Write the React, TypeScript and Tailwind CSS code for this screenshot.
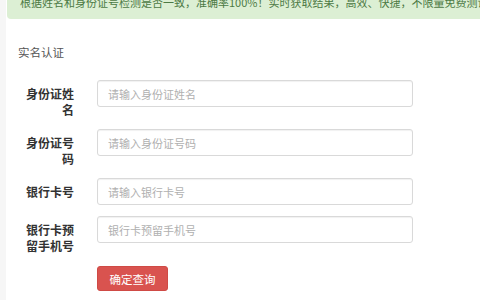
import React from "react";

const rows = [
  { label: "身份证姓名", placeholder: "请输入身份证姓名" },
  { label: "身份证号码", placeholder: "请输入身份证号码" },
  { label: "银行卡号", placeholder: "请输入银行卡号" },
  { label: "银行卡预留手机号", placeholder: "银行卡预留手机号" },
];

export default function App() {
  return (
    <div
      className="w-[480px] h-[300px] overflow-hidden bg-white flex"
      style={{ fontFamily: '"Noto Sans CJK SC", "Noto Sans", sans-serif' }}
    >
      {/* left page edge */}
      <div className="w-[6px] shrink-0 bg-[#f6f6f6]" />

      <div className="flex-1 flex flex-col min-w-0">
        {/* success alert, scrolled partly out of view */}
        <div className="h-[27px] -mt-[8px] ml-[1px] -mr-[20px] bg-[#dcefd4] rounded-bl-[4px] pl-[13px] whitespace-nowrap overflow-hidden">
          <p className="text-[11px] leading-[20px] text-[#4c7a45]">
            根据姓名和身份证号检测是否一致，准确率100%！实时获取结果，高效、快捷，不限量免费测试。
          </p>
        </div>

        <h2 className="mt-[25px] ml-[12px] text-[11.5px] leading-[16px] text-[#555]">实名认证</h2>

        <form className="mt-[20px] flex flex-col gap-[11px]">
          {rows.map((r) => (
            <div key={r.label} className="flex items-start">
              <label className="w-[49px] ml-[19px] pt-[6px] text-right text-[12px] leading-[16px] font-bold text-[#333] break-all">
                {r.label}
              </label>
              <input
                type="text"
                placeholder={r.placeholder}
                className="ml-[23px] w-[316px] h-[27px] px-[10px] text-[11px] text-[#555] placeholder:text-[#b0b0b0] border border-[#d9d9d9] rounded-[3px] shadow-[inset_0_1px_1px_rgba(0,0,0,0.06)] outline-none bg-white"
              />
            </div>
          ))}
        </form>

        <div className="mt-[11px] ml-[91px]">
          <button
            type="button"
            className="w-[71px] h-[25px] rounded-[3px] bg-[#d9534f] text-white text-[11.5px] leading-[25px] border border-[#cf4a45]"
          >
            确定查询
          </button>
        </div>
      </div>
    </div>
  );
}
